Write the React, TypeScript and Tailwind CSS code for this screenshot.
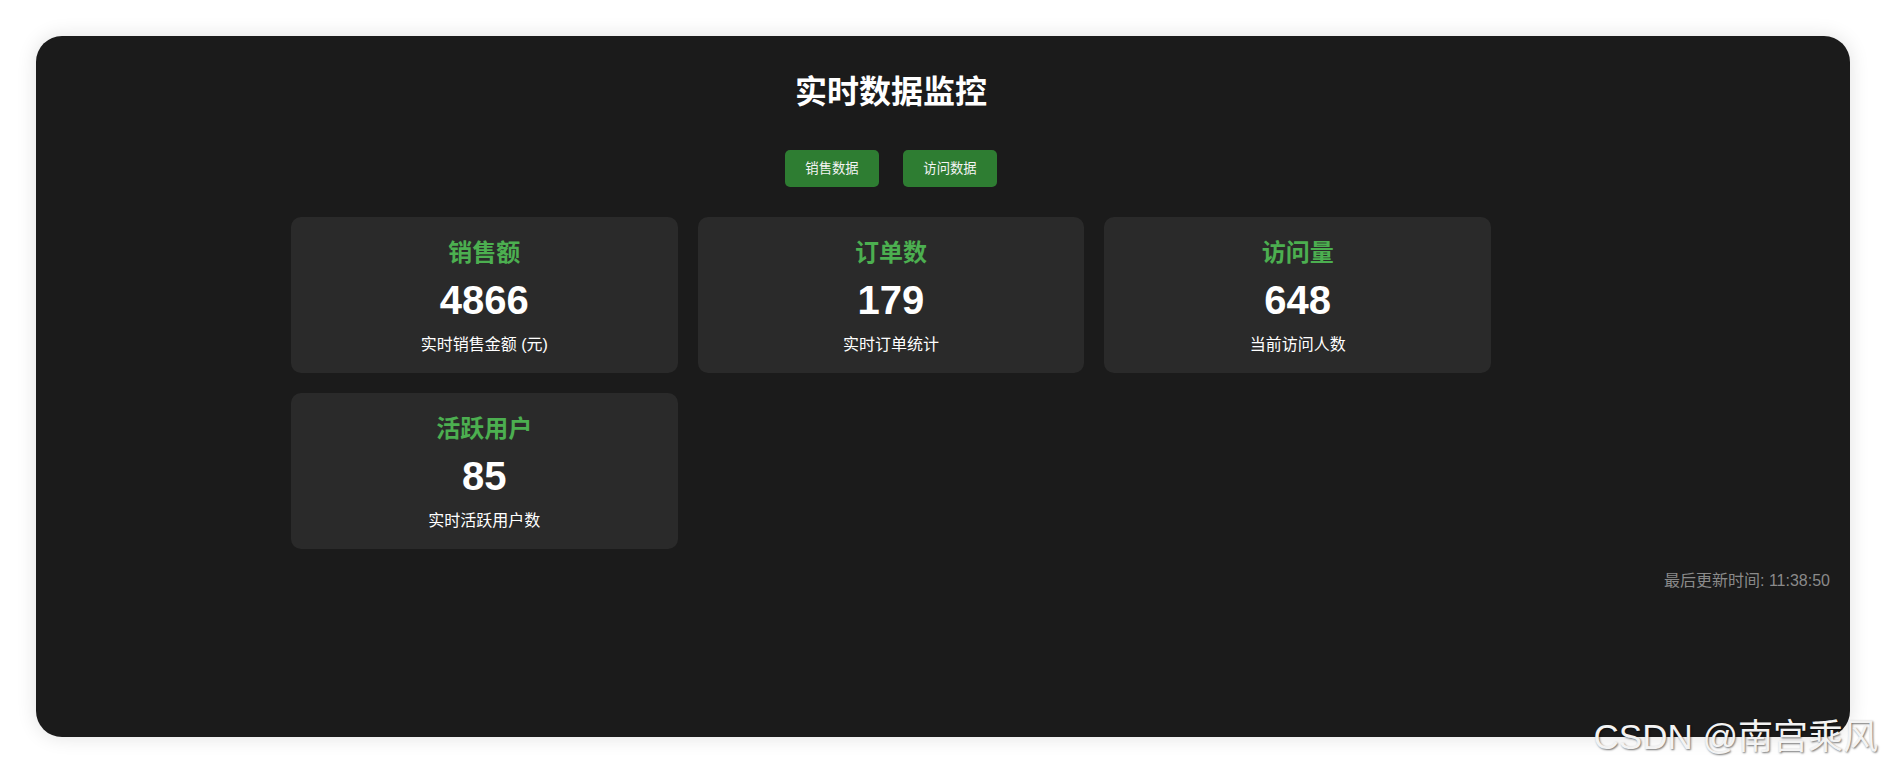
import React from 'react';

interface Stat {
  title: string;
  value: number;
  desc: string;
}

const stats: Stat[] = [
  { title: '销售额', value: 4866, desc: '实时销售金额 (元)' },
  { title: '订单数', value: 179, desc: '实时订单统计' },
  { title: '访问量', value: 648, desc: '当前访问人数' },
  { title: '活跃用户', value: 85, desc: '实时活跃用户数' },
];

const StatCard: React.FC<{ stat: Stat }> = ({ stat }) => (
  <div className="bg-[#2a2a2a] rounded-[10px] pt-5 pb-4 flex flex-col items-center text-center">
    <h3 className="text-[24px] leading-[32px] font-bold text-[#4caf50]">{stat.title}</h3>
    <div className="mt-[8px] text-[40px] leading-[46px] font-bold text-white">{stat.value}</div>
    <p className="mt-[10px] text-[16px] leading-[24px] text-white">{stat.desc}</p>
  </div>
);

const App: React.FC = () => {
  return (
    <div className="relative min-h-screen bg-white pl-[36px] pt-[36px] font-['Liberation_Sans','Noto_Sans_CJK_SC',sans-serif]">
      <div className="w-[1814px] h-[701px] bg-[#1b1b1b] rounded-[26px] shadow-[0_0_20px_rgba(0,0,0,0.12)] pt-[36px] px-[20px] flex flex-col">
        <div className="ml-[235px] w-[1200px] flex flex-col">
          <h1 className="text-center text-[32px] leading-[40px] font-bold text-white">实时数据监控</h1>

          <div className="mt-[38px] flex justify-center gap-6">
            <button className="w-[94px] h-[37px] rounded-[5px] bg-[#2e7d32] text-[13.33px] text-[#f4f4f4]">
              销售数据
            </button>
            <button className="w-[94px] h-[37px] rounded-[5px] bg-[#2e7d32] text-[13.33px] text-[#f4f4f4]">
              访问数据
            </button>
          </div>

          <div className="mt-[30px] grid grid-cols-3 gap-5">
            {stats.map((s) => (
              <StatCard key={s.title} stat={s} />
            ))}
          </div>
        </div>

        <div className="mt-[20px] text-right text-[16px] leading-[24px] text-[#8a8a8a]">
          最后更新时间: 11:38:50
        </div>
      </div>

      {/* watermark */}
      <div className="absolute right-[8px] top-[717px] text-[35px] leading-[40px] text-[#f3f3f3] [text-shadow:1px_1px_2px_rgba(0,0,0,0.55)] pointer-events-none">
        CSDN @南宫乘风
      </div>
    </div>
  );
};

export default App;
